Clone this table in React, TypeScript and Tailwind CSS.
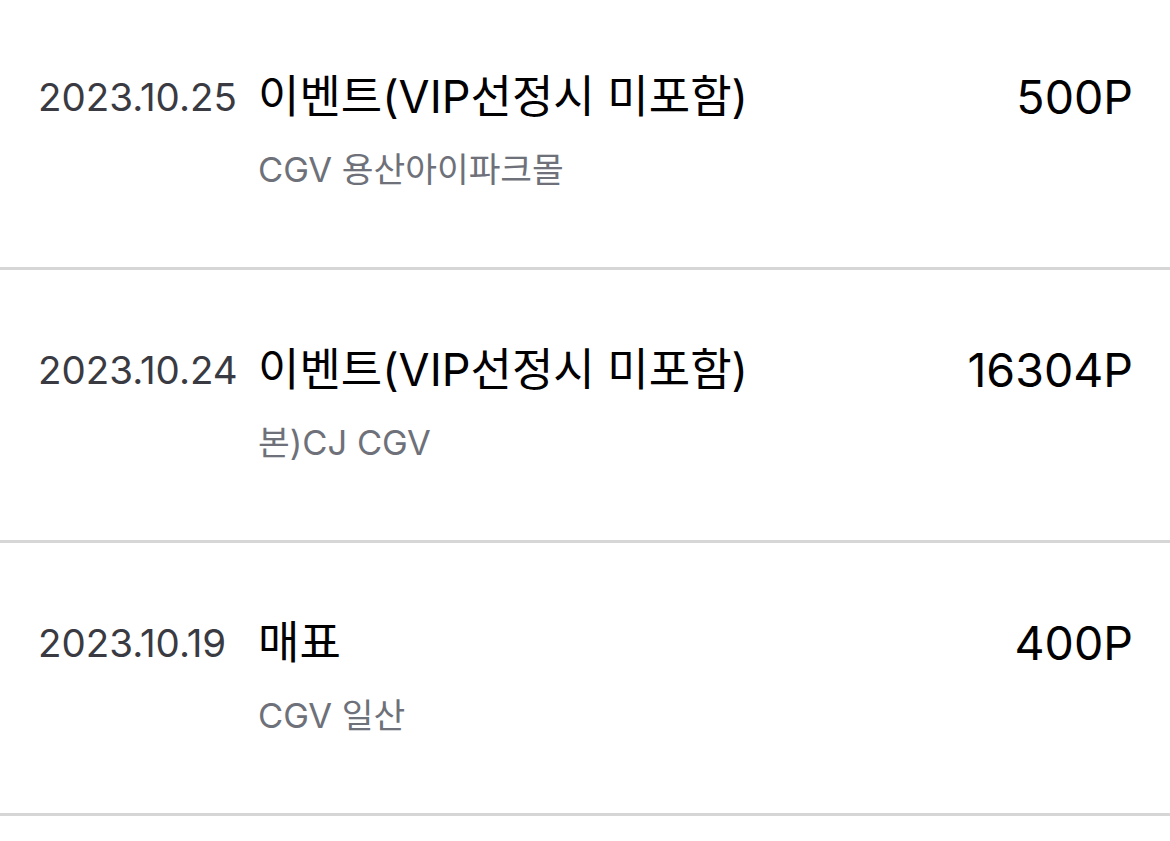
const rows = [
  { date: "2023.10.25", title: "이벤트(VIP선정시 미포함)", place: "CGV 용산아이파크몰", point: "500P" },
  { date: "2023.10.24", title: "이벤트(VIP선정시 미포함)", place: "본)CJ CGV", point: "16304P" },
  { date: "2023.10.19", title: "매표", place: "CGV 일산", point: "400P" },
];

const font = { fontFamily: 'Inter, "Noto Sans CJK KR", sans-serif' };

export default function App() {
  return (
    <div className="w-[1170px] min-h-[841px] bg-white overflow-hidden" style={font}>
      <div className="-mt-[3px]">
        {rows.map((r) => (
          <div key={r.date} className="h-[273px] border-b-[3px] border-[#d6d6d6] flex pl-[38px] pr-[37px] pt-[75px]">
            <div className="w-[220px] shrink-0 text-[38.5px] leading-[50px] text-[#3a3b42]">{r.date}</div>
            <div className="flex-1">
              <div className="text-[45px] leading-[50px] text-black">{r.title}</div>
              <div className="mt-[26px] text-[34.5px] leading-[44px] text-[#6e7179]">{r.place}</div>
            </div>
            <div className="text-[46.5px] leading-[50px] text-black">{r.point}</div>
          </div>
        ))}
      </div>
    </div>
  );
}
